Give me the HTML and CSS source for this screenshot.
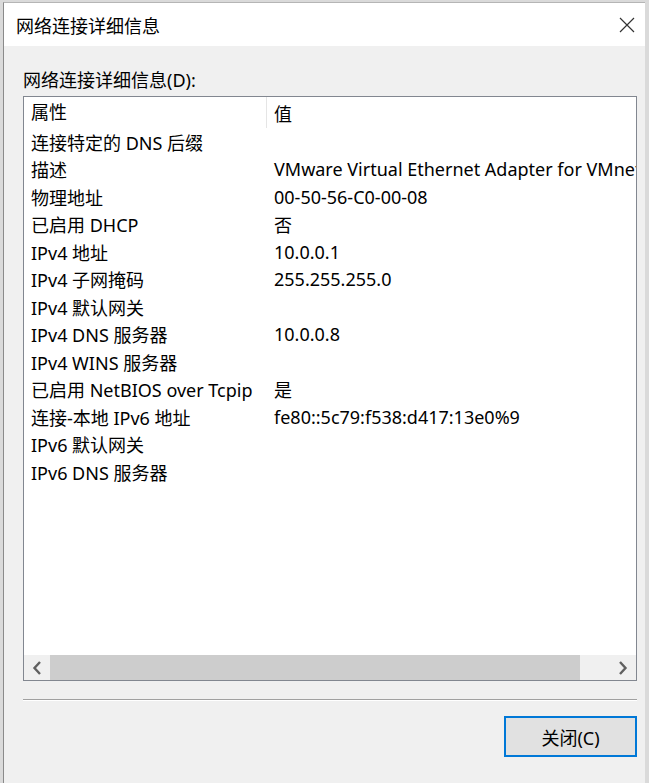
FILE: index.html
```html
<!DOCTYPE html>
<html>

<head>
    <meta charset="UTF-8">
    <meta name="viewport" content="width=device-width, initial-scale=1.0">
    <title>网络连接详细信息</title>
    <link rel="stylesheet" href="styles.css">
</head>

<body>
    <div class="window">
        <div class="titlebar">
            <span class="title">网络连接详细信息</span>
            <svg class="close" width="16" height="16" viewBox="0 0 16 16">
                <path d="M1 1 L15 15 M15 1 L1 15" stroke="#333" stroke-width="1.2" fill="none" />
            </svg>
        </div>

        <div class="content">
            <div class="label">网络连接详细信息(D):</div>

            <div class="listbox">
                <div class="rows">
                    <div class="row header">
                        <div class="cell name">属性</div>
                        <div class="cell value">值</div>
                    </div>
                    <div class="row">
                        <div class="cell name">连接特定的 DNS 后缀</div>
                        <div class="cell value"></div>
                    </div>
                    <div class="row">
                        <div class="cell name">描述</div>
                        <div class="cell value">VMware Virtual Ethernet Adapter for VMnet8</div>
                    </div>
                    <div class="row">
                        <div class="cell name">物理地址</div>
                        <div class="cell value">00-50-56-C0-00-08</div>
                    </div>
                    <div class="row">
                        <div class="cell name">已启用 DHCP</div>
                        <div class="cell value">否</div>
                    </div>
                    <div class="row">
                        <div class="cell name">IPv4 地址</div>
                        <div class="cell value">10.0.0.1</div>
                    </div>
                    <div class="row">
                        <div class="cell name">IPv4 子网掩码</div>
                        <div class="cell value">255.255.255.0</div>
                    </div>
                    <div class="row">
                        <div class="cell name">IPv4 默认网关</div>
                        <div class="cell value"></div>
                    </div>
                    <div class="row">
                        <div class="cell name">IPv4 DNS 服务器</div>
                        <div class="cell value">10.0.0.8</div>
                    </div>
                    <div class="row">
                        <div class="cell name">IPv4 WINS 服务器</div>
                        <div class="cell value"></div>
                    </div>
                    <div class="row">
                        <div class="cell name">已启用 NetBIOS over Tcpip</div>
                        <div class="cell value">是</div>
                    </div>
                    <div class="row">
                        <div class="cell name">连接-本地 IPv6 地址</div>
                        <div class="cell value">fe80::5c79:f538:d417:13e0%9</div>
                    </div>
                    <div class="row">
                        <div class="cell name">IPv6 默认网关</div>
                        <div class="cell value"></div>
                    </div>
                    <div class="row">
                        <div class="cell name">IPv6 DNS 服务器</div>
                        <div class="cell value"></div>
                    </div>
                </div>

                <div class="hscroll">
                    <div class="arrow">
                        <svg width="10" height="14" viewBox="0 0 10 14">
                            <path d="M8 1 L2.5 7 L8 13" stroke="#606060" stroke-width="2.4" fill="none" />
                        </svg>
                    </div>
                    <div class="track">
                        <div class="thumb"></div>
                    </div>
                    <div class="arrow">
                        <svg width="10" height="14" viewBox="0 0 10 14">
                            <path d="M2 1 L7.5 7 L2 13" stroke="#606060" stroke-width="2.4" fill="none" />
                        </svg>
                    </div>
                </div>
            </div>

            <div class="separator"></div>

            <div class="buttons">
                <button type="button" class="btn">关闭(C)</button>
            </div>
        </div>
    </div>
</body>

</html>
```

FILE: styles.css
```css
body {
    margin: 0;
    padding: 0;
    background-color: #dadada;
    font-family: "Noto Sans", "Noto Sans CJK SC", sans-serif;
    color: #000;
    overflow: hidden;
}

.window {
    margin: 2px 4px 0 3px;
    height: 781px;
    background-color: #f0f0f0;
    border-left: 1px solid #8a8a8a;
    border-top: 1px solid #b5b5b5;
    box-sizing: border-box;
}

.titlebar {
    height: 43px;
    background-color: #fff;
    display: flex;
    align-items: center;
    justify-content: space-between;
    padding: 0 8px 0 12px;
}

.title {
    font-size: 18px;
}

.close {
    margin-right: 2px;
}

.content {
    padding: 0 8px 0 19px;
}

.label {
    font-size: 18px;
    height: 24px;
    line-height: 24px;
    margin-top: 22px;
    margin-bottom: 4px;
}

.listbox {
    height: 585px;
    border: 1px solid #828790;
    background-color: #fff;
    display: flex;
    flex-direction: column;
    box-sizing: border-box;
}

.rows {
    flex: 1;
    overflow: hidden;
}

.row {
    display: flex;
    height: 27.5px;
    align-items: center;
    font-size: 18px;
    white-space: nowrap;
}

.row.header {
    height: 31px;
}

.cell {
    padding-left: 7px;
    box-sizing: border-box;
    overflow: hidden;
}

.name {
    width: 243px;
    flex: none;
}

.value {
    flex: 1;
}

.header .name {
    height: 100%;
    line-height: 31px;
    border-right: 1px solid #e5e5e5;
}

.hscroll {
    height: 25px;
    display: flex;
    background-color: #f0f0f0;
    flex: none;
}

.arrow {
    width: 26px;
    display: flex;
    align-items: center;
    justify-content: center;
}

.track {
    flex: 1;
    display: flex;
}

.thumb {
    width: 530px;
    background-color: #cdcdcd;
}

.separator {
    margin-top: 18px;
    height: 1px;
    background-color: #a0a0a0;
    border-bottom: 1px solid #fff;
}

.buttons {
    display: flex;
    justify-content: flex-end;
    margin-top: 15px;
}

.btn {
    width: 133px;
    height: 41px;
    background-color: #e1e1e1;
    border: 2px solid #0078d7;
    font-family: "Noto Sans", "Noto Sans CJK SC", sans-serif;
    font-size: 18px;
    color: #000;
    padding: 0;
}
```
